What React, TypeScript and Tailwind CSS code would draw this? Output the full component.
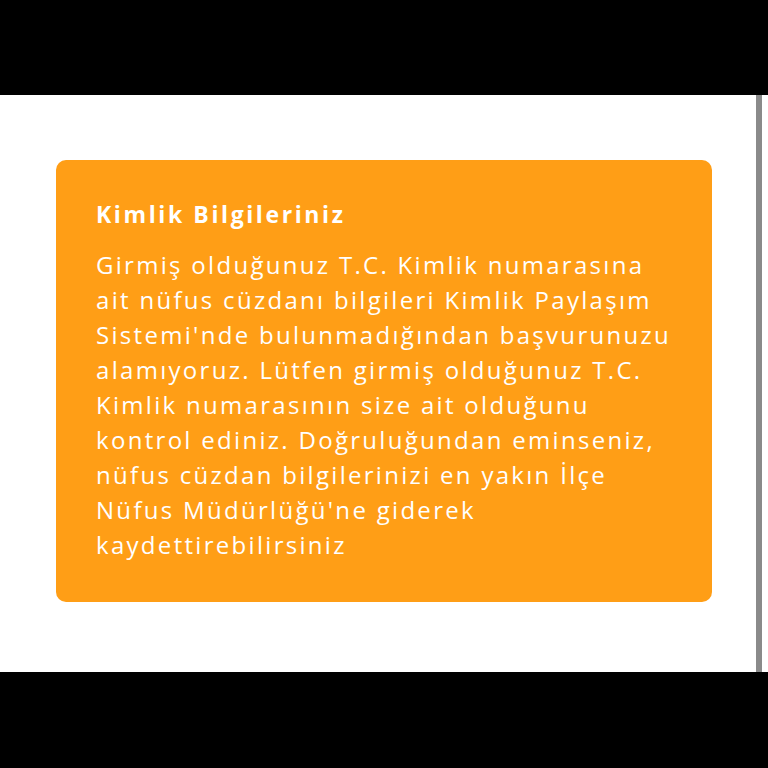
const lines = [
  "Girmiş olduğunuz T.C. Kimlik numarasına",
  "ait nüfus cüzdanı bilgileri Kimlik Paylaşım",
  "Sistemi'nde bulunmadığından başvurunuzu",
  "alamıyoruz. Lütfen girmiş olduğunuz T.C.",
  "Kimlik numarasının size ait olduğunu",
  "kontrol ediniz. Doğruluğundan eminseniz,",
  "nüfus cüzdan bilgilerinizi en yakın İlçe",
  "Nüfus Müdürlüğü'ne giderek",
  "kaydettirebilirsiniz",
];

export default function App() {
  return (
    <div className="w-[768px] h-[768px] flex flex-col bg-black overflow-hidden" style={{ fontFamily: '"Open Sans", "Noto Sans", sans-serif' }}>
      <div className="h-[95px] bg-black" />
      <div className="h-[577px] bg-white flex">
        <div className="w-[756px] pt-[65px] pl-[56px] pr-[44px]">
          <div className="bg-[#ff9e16] rounded-[10px] h-[442px] pl-[40px] pr-[20px] pt-[38px] text-white">
            <h1 className="text-[23px] font-bold leading-[32px] tracking-[2.6px] whitespace-nowrap">Kimlik Bilgileriniz</h1>
            <div className="mt-[17px] text-[24px] leading-[35px] tracking-[2.3px]">
              {lines.map((l, i) => (
                <div key={i} className="whitespace-nowrap">{l}</div>
              ))}
            </div>
          </div>
        </div>
        <div className="w-[6px] bg-[#8a8a8a]" />
        <div className="w-[6px] bg-white" />
      </div>
      <div className="h-[96px] bg-black" />
    </div>
  );
}
